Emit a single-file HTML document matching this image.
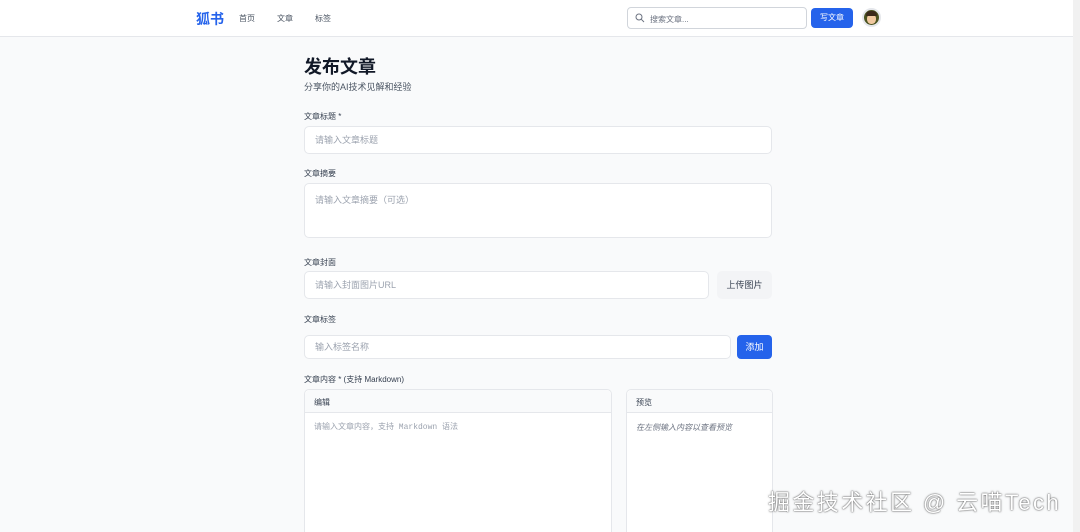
<!DOCTYPE html>
<html><head><meta charset="utf-8"><style>
*{box-sizing:border-box;margin:0;padding:0}
body{width:1080px;height:532px;overflow:hidden;background:#f9fafb;font-family:"Liberation Sans","Noto Sans CJK SC",sans-serif;color:#374151;position:relative}
.hdr{position:absolute;left:0;top:0;width:1080px;height:37px;background:#fff;border-bottom:1px solid #e5e7eb}
.logo{position:absolute;left:196px;top:9px;font-size:14px;font-weight:bold;color:#2563eb}
.nav{position:absolute;top:13px;font-size:8px;color:#4b5563}
.search{position:absolute;left:627px;top:7px;width:180px;height:22px;border:1px solid #d1d5db;border-radius:4px;background:#fff;font-size:8px;color:#6b7280;padding:6px 0 0 22px}
.btn{position:absolute;background:#2563eb;color:#fff;border-radius:4px;font-size:8px;text-align:center}
.av{position:absolute;left:862px;top:8px;width:19px;height:19px;border-radius:50%;background:#4b5320;border:2px solid #e5e7eb;overflow:hidden}
.lbl{position:absolute;left:304px;font-size:8px;color:#374151}
.in{position:absolute;background:#fff;border:1px solid #e5e7eb;border-radius:5px;font-size:9px;color:#9ca3af;padding-left:10px}
.box{position:absolute;background:#fff;border:1px solid #e5e7eb;border-radius:5px 5px 0 0;border-bottom:none}
.bh{height:23px;border-bottom:1px solid #e5e7eb;background:#f9fafb;font-size:8px;padding:7px 0 0 9px;color:#374151;border-radius:5px 5px 0 0}
.wm{position:absolute;left:768px;top:485px;font-size:22px;letter-spacing:2.4px;color:#fff;text-shadow:0 0 2px rgba(0,0,0,.5),0 0 1px rgba(0,0,0,.7);white-space:nowrap}
</style></head><body>
<div class="hdr">
<div class="logo">狐书</div>
<div class="nav" style="left:239px">首页</div>
<div class="nav" style="left:277px">文章</div>
<div class="nav" style="left:315px">标签</div>
<div class="search"><svg style="position:absolute;left:7px;top:5px" width="10" height="10" viewBox="0 0 10 10"><circle cx="4" cy="4" r="3" fill="none" stroke="#6b7280" stroke-width="1"/><path d="M6.3 6.3L9 9" stroke="#6b7280" stroke-width="1"/></svg>搜索文章...</div>
<div class="btn" style="left:811px;top:8px;width:42px;height:20px;line-height:20px">写文章</div>
<div class="av"><div style="position:absolute;left:3px;top:4px;width:9px;height:10px;border-radius:45%;background:#f1c9a0"></div><div style="position:absolute;left:2px;top:1px;width:11px;height:5px;border-radius:5px 5px 1px 1px;background:#3b2a1a"></div></div>
</div>
<div style="position:absolute;left:304px;top:53px;font-size:18px;font-weight:bold;color:#111827">发布文章</div>
<div style="position:absolute;left:304px;top:80px;font-size:9px;color:#4b5563">分享你的AI技术见解和经验</div>
<div class="lbl" style="top:111px">文章标题 *</div>
<div class="in" style="left:304px;top:126px;width:468px;height:28px;line-height:27px">请输入文章标题</div>
<div class="lbl" style="top:168px">文章摘要</div>
<div class="in" style="left:304px;top:183px;width:468px;height:55px;padding-top:9px">请输入文章摘要（可选）</div>
<div class="lbl" style="top:257px">文章封面</div>
<div class="in" style="left:304px;top:271px;width:405px;height:28px;line-height:27px">请输入封面图片URL</div>
<div style="position:absolute;left:717px;top:271px;width:55px;height:28px;line-height:28px;background:#f3f4f6;border-radius:5px;font-size:9px;color:#374151;text-align:center">上传图片</div>
<div class="lbl" style="top:314px">文章标签</div>
<div class="in" style="left:304px;top:335px;width:427px;height:24px;line-height:23px">输入标签名称</div>
<div class="btn" style="left:737px;top:335px;width:35px;height:24px;line-height:24px;font-size:9px">添加</div>
<div class="lbl" style="top:374px">文章内容 * (支持 Markdown)</div>
<div class="box" style="left:304px;top:389px;width:308px;height:143px"><div class="bh">编辑</div><div style="font-family:'Liberation Mono','Noto Sans CJK SC',monospace;font-size:8px;color:#9ca3af;padding:8px 9px">请输入文章内容，支持 Markdown 语法</div></div>
<div class="box" style="left:626px;top:389px;width:147px;height:143px"><div class="bh">预览</div><div style="font-size:8px;font-style:italic;color:#6b7280;padding:9px 9px">在左侧输入内容以查看预览</div></div>
<div style="position:absolute;left:1073px;top:0;width:7px;height:532px;background:#f1f1f1"></div>
<div class="wm">掘金技术社区 @ 云喵Tech</div>
</body></html>
